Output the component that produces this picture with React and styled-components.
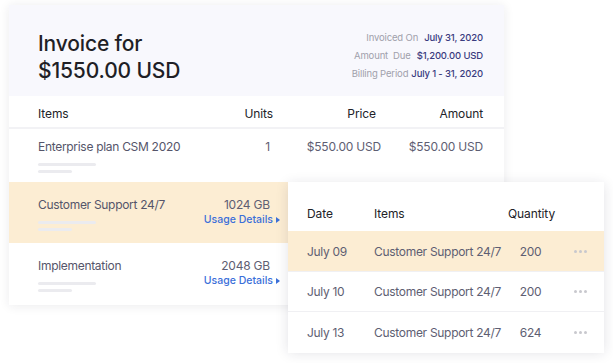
import React from 'react'
import styled, { createGlobalStyle } from 'styled-components'

const GlobalStyle = createGlobalStyle`
body {
    margin: 0;
    background: #fff;
    font-family: Inter, "Noto Sans", sans-serif;
}
`

const items = [
    { name: 'Enterprise plan CSM 2020', units: '1', price: '$550.00 USD', amount: '$550.00 USD', height: 53 },
    { name: 'Customer Support 24/7', units: '1024 GB', usage: true, active: true, height: 61 },
    { name: 'Implementation', units: '2048 GB', usage: true, height: 62 },
]

const usage = [
    { date: 'July 09', item: 'Customer Support 24/7', qty: '200', active: true },
    { date: 'July 10', item: 'Customer Support 24/7', qty: '200' },
    { date: 'July 13', item: 'Customer Support 24/7', qty: '624' },
]

const App = () => {
    return (
        <Stage>
            <GlobalStyle />
            <Card>
                <Header>
                    <Title>Invoice for<br />$1550.00 USD</Title>
                    <Meta>
                        <MetaLine><span>Invoiced On</span><b>July 31, 2020</b></MetaLine>
                        <MetaLine><span>Amount&nbsp; Due</span><b>$1,200.00 USD</b></MetaLine>
                        <MetaLine gap={3}><span>Billing Period</span><b>July 1 - 31, 2020</b></MetaLine>
                    </Meta>
                </Header>
                <HeadRow>
                    <Cell>Items</Cell>
                    <Cell right>Units</Cell>
                    <Cell right>Price</Cell>
                    <Cell right>Amount</Cell>
                </HeadRow>
                {items.map((it) => (
                    <Row key={it.name} active={it.active} h={it.height}>
                        <Cell>
                            <Name>{it.name}</Name>
                            <Bar w={58} />
                            <Bar w={34} />
                        </Cell>
                        <Cell right>
                            <Value shift={-3}>{it.units}</Value>
                            {it.usage && <Usage>Usage Details <Arrow /></Usage>}
                        </Cell>
                        <Cell right><Value shift={5}>{it.price}</Value></Cell>
                        <Cell right><Value>{it.amount}</Value></Cell>
                    </Row>
                ))}
            </Card>
            <Popup>
                <PopHead>
                    <span>Date</span>
                    <span>Items</span>
                    <span>Quantity</span>
                    <span />
                </PopHead>
                {usage.map((u, i) => (
                    <PopRow key={u.date} active={u.active} last={i === usage.length - 1}>
                        <span>{u.date}</span>
                        <span>{u.item}</span>
                        <Qty>{u.qty}</Qty>
                        <Dots><i /><i /><i /></Dots>
                    </PopRow>
                ))}
            </Popup>
        </Stage>
    )
}

const Stage = styled.div`
position: relative;
width: 613px;
height: 363px;
padding: 5px 0 0 9px;
box-sizing: border-box;
`

const Card = styled.div`
width: 495px;
height: 300px;
background: #fff;
box-shadow: 0 1px 10px rgba(30, 30, 60, 0.09);
`

const Header = styled.div`
height: 91px;
background: #f8f8fd;
display: flex;
justify-content: space-between;
align-items: flex-start;
padding: 0 21px 0 29px;
box-sizing: border-box;
`

const Title = styled.h1`
margin: 25px 0 0;
font-size: 21px;
line-height: 27px;
font-weight: 500;
color: #1f1f26;
letter-spacing: -0.15px;
`

const Meta = styled.div`
margin-top: 26px;
display: flex;
flex-direction: column;
align-items: flex-end;
gap: 4px;
`

const MetaLine = styled.div`
display: flex;
gap: ${(p) => p.gap || 6}px;
font-size: 9.5px;
line-height: 14px;
letter-spacing: -0.15px;
span {
    color: #a0a0ab;
}
b {
    font-weight: 500;
    color: #3a3c80;
}
`

const grid = `
display: grid;
grid-template-columns: 160px 75px 103px 107px;
padding: 0 21px 0 29px;
box-sizing: border-box;
`

const HeadRow = styled.div`
${grid}
height: 33px;
padding-top: 3px;
align-items: center;
font-size: 12px;
letter-spacing: -0.1px;
color: #222228;
border-bottom: 2px solid #f2f2f5;
`

const Row = styled.div`
${grid}
height: ${(p) => p.h}px;
padding-top: ${(p) => (p.h > 55 ? 15 : 10)}px;
background: ${(p) => (p.active ? '#fcedd3' : '#fff')};
`

const Cell = styled.div`
display: flex;
flex-direction: column;
align-items: ${(p) => (p.right ? 'flex-end' : 'flex-start')};
white-space: nowrap;
`

const Name = styled.div`
font-size: 12px;
line-height: 16px;
letter-spacing: -0.3px;
color: #55556a;
margin-bottom: 8px;
`

const Bar = styled.div`
width: ${(p) => p.w}px;
height: 3px;
border-radius: 2px;
background: #ebebef;
margin-bottom: 4px;
`

const Value = styled.div`
font-size: 12px;
line-height: 16px;
letter-spacing: -0.2px;
color: #5e5e72;
margin-right: ${(p) => -(p.shift || 0)}px;
`

const Usage = styled.div`
display: flex;
align-items: center;
gap: 3px;
margin-right: -7px;
font-size: 10.5px;
line-height: 14px;
font-weight: 500;
color: #3b6fd9;
`

const Arrow = styled.span`
width: 0;
height: 0;
border-top: 3px solid transparent;
border-bottom: 3px solid transparent;
border-left: 4px solid #3b6fd9;
`

const Popup = styled.div`
position: absolute;
left: 288px;
top: 182px;
width: 316px;
height: 169px;
background: #fff;
box-shadow: 0 2px 12px rgba(30, 30, 60, 0.13);
`

const popGrid = `
display: grid;
grid-template-columns: 67px 134px 45px 1fr;
padding-left: 19px;
align-items: center;
font-size: 12px;
letter-spacing: -0.3px;
white-space: nowrap;
`

const PopHead = styled.div`
${popGrid}
height: 49px;
padding-top: 13px;
box-sizing: border-box;
color: #222228;
letter-spacing: -0.1px;
`

const PopRow = styled.div`
${popGrid}
height: ${(p) => (p.last ? 41 : p.active ? 40 : 39)}px;
color: #5e5e72;
background: ${(p) => (p.active ? '#fcedd3' : '#fff')};
border-top: ${(p) => (p.active ? 'none' : '1px solid #f0f0f3')};
`

const Qty = styled.span`
text-align: center;
`

const Dots = styled.div`
display: flex;
gap: 2px;
padding-left: 21px;
i {
    width: 3px;
    height: 3px;
    border-radius: 50%;
    background: #c8c8ce;
}
`

export default App
